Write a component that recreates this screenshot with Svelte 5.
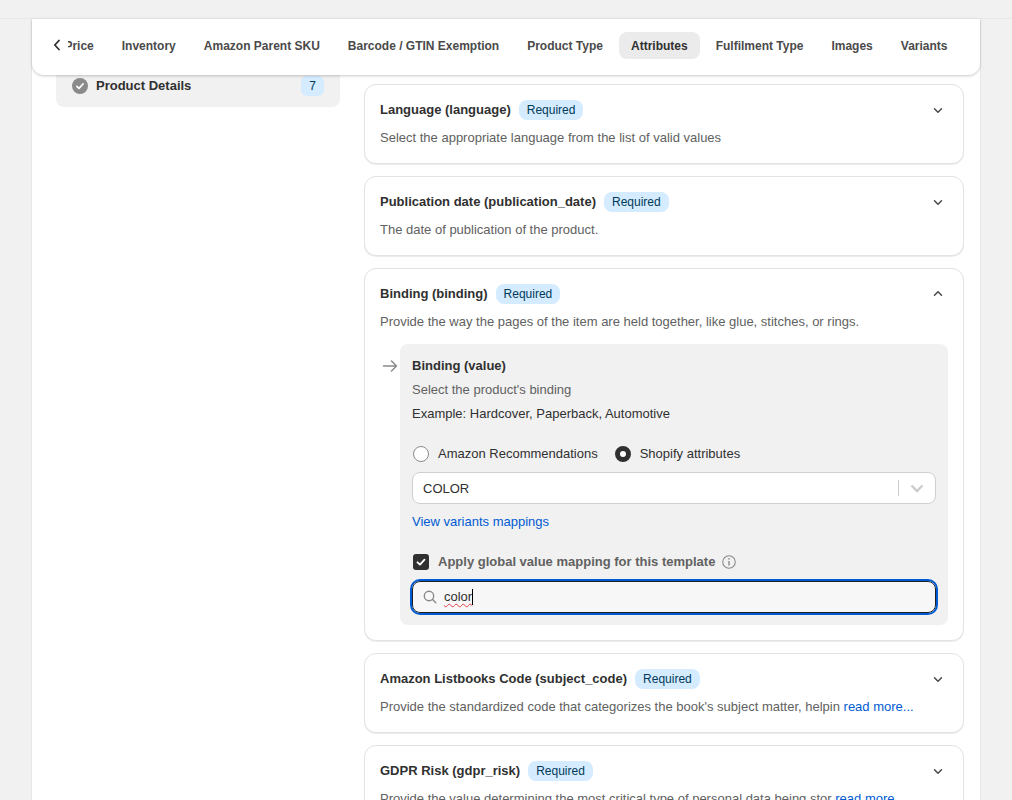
<script>
  const tabs = ['Price', 'Inventory', 'Amazon Parent SKU', 'Barcode / GTIN Exemption', 'Product Type', 'Attributes', 'Fulfilment Type', 'Images', 'Variants'];
  const before = [
    { t: 'Language (language)', d: 'Select the appropriate language from the list of valid values' },
    { t: 'Publication date (publication_date)', d: 'The date of publication of the product.' }
  ];
  const after = [
    { t: 'Amazon Listbooks Code (subject_code)', d: "Provide the standardized code that categorizes the book's subject matter, helpin", more: true },
    { t: 'GDPR Risk (gdpr_risk)', d: 'Provide the value determining the most critical type of personal data being stor', more: true }
  ];
</script>

{#snippet chev(up)}
  <svg class="chev" class:up viewBox="0 0 16 16" width="16" height="16" fill="none" stroke="#4a4a4a" stroke-width="1.5" stroke-linecap="round" stroke-linejoin="round"><path d="M4.5 6.8 8 10.3l3.5-3.5"/></svg>
{/snippet}

{#snippet head(title, up)}
  <div class="head">
    <strong>{title}</strong>
    <span class="badge">Required</span>
    <span class="spacer"></span>
    {@render chev(up)}
  </div>
{/snippet}

{#snippet card(c)}
  <section class="card">
    {@render head(c.t, false)}
    <p class="desc">{c.d}{#if c.more}{' '}<a href="#top">read more...</a>{/if}</p>
  </section>
{/snippet}

<div class="page">
  <div class="canvas">
    <div class="panel">
      <header class="bar">
        <svg class="back" viewBox="0 0 16 16" width="16" height="16" fill="none" stroke="#303030" stroke-width="1.8" stroke-linecap="round" stroke-linejoin="round"><path d="M10 3.5 5.8 8l4.2 4.5"/></svg>
        <nav class="tabs">
          {#each tabs as tab}
            <span class="tab" class:active={tab === 'Attributes'}>{tab}</span>
          {/each}
        </nav>
      </header>

      <div class="content">
        <aside class="side">
          <div class="side-row">
            <svg viewBox="0 0 16 16" width="16" height="16"><circle cx="8" cy="8" r="8" fill="#8a8a8a"/><path d="M4.8 8.3 7 10.4l4.2-4.6" fill="none" stroke="#fff" stroke-width="1.6" stroke-linecap="round" stroke-linejoin="round"/></svg>
            <strong>Product Details</strong>
            <span class="spacer"></span>
            <span class="count">7</span>
          </div>
        </aside>

        <main class="cards">
          {#each before as c}
            {@render card(c)}
          {/each}

          <section class="card">
            {@render head('Binding (binding)', true)}
            <p class="desc">Provide the way the pages of the item are held together, like glue, stitches, or rings.</p>
            <div class="nested">
              <svg class="arrow" viewBox="0 0 16 16" width="16" height="16" fill="none" stroke="#8a8a8a" stroke-width="1.5" stroke-linecap="round" stroke-linejoin="round"><path d="M1.5 8h13M9.5 3l5 5-5 5"/></svg>
              <div class="inner">
                <strong class="line">Binding (value)</strong>
                <p class="desc tight">Select the product's binding</p>
                <p class="example">Example: Hardcover, Paperback, Automotive</p>

                <div class="radios">
                  <label class="radio"><span class="dot"></span>Amazon Recommendations</label>
                  <label class="radio"><span class="dot on"></span>Shopify attributes</label>
                </div>

                <div class="select">
                  <span class="value">COLOR</span>
                  <span class="spacer"></span>
                  <span class="sep"></span>
                  <svg viewBox="0 0 20 20" width="20" height="20" fill="none" stroke="#cccccc" stroke-width="2.4"><path d="M4.5 7.5 10 13l5.5-5.5"/></svg>
                </div>

                <a class="link" href="#top">View variants mappings</a>

                <div class="check">
                  <span class="box"><svg viewBox="0 0 16 16" width="16" height="16" fill="none" stroke="#fff" stroke-width="1.8" stroke-linecap="round" stroke-linejoin="round"><path d="M4.5 8.3 7 10.7l4.5-5"/></svg></span>
                  <strong>Apply global value mapping for this template</strong>
                  <svg viewBox="0 0 16 16" width="16" height="16" fill="none" stroke="#8a8a8a" stroke-width="1.1"><circle cx="8" cy="8" r="6.3"/><path d="M8 7v4.6" stroke-width="1.4"/><circle cx="8" cy="4.9" r=".8" fill="#8a8a8a" stroke="none"/></svg>
                </div>

                <div class="search">
                  <svg viewBox="0 0 16 16" width="16" height="16" fill="none" stroke="#8a8a8a" stroke-width="1.4" stroke-linecap="round"><circle cx="7" cy="7" r="4.7"/><path d="m10.6 10.6 3.2 3.2"/></svg>
                  <span class="typed">color</span><span class="caret"></span>
                </div>
              </div>
            </div>
          </section>

          {#each after as c}
            {@render card(c)}
          {/each}
        </main>
      </div>
    </div>
  </div>
</div>

<style>
  :global(body) {
    margin: 0;
    background: #f1f1f1;
  }
  .page {
    height: 800px;
    overflow: hidden;
    box-sizing: border-box;
    padding-top: 18px;
    font: 13px/20px "Liberation Sans", Arial, sans-serif;
    color: #303030;
  }
  .canvas {
    border-top: 1px solid #e8e8e8;
  }
  .panel {
    width: 948px;
    margin-left: 32px;
    min-height: 781px;
    background: #fff;
    box-shadow: 0 0 0 1px #e6e6e6;
  }
  p { margin: 0; }
  a { color: #005bd3; text-decoration: none; }
  .spacer { flex: 1; }

  .bar {
    position: relative;
    z-index: 2;
    height: 56px;
    box-sizing: border-box;
    padding: 13px 20.5px 0 36px;
    display: flex;
    background: #fff;
    border-radius: 0 0 12px 12px;
    box-shadow: 0 1px 3px rgba(0, 0, 0, 0.22);
  }
  .back {
    position: absolute;
    left: 17px;
    top: 18px;
  }
  .tabs {
    flex: 1;
    min-width: 0;
    overflow: hidden;
    display: flex;
    justify-content: flex-end;
    gap: 4px;
    height: 28px;
  }
  .tab {
    flex: none;
    height: 27px;
    line-height: 28px;
    padding: 0 12px;
    border-radius: 8px;
    font-size: 12px;
    font-weight: 700;
    color: #4a4a4a;
  }
  .tab.active {
    background: #ebebeb;
    color: #303030;
  }

  .content {
    display: flex;
    padding: 0 16px 0 24px;
    gap: 24px;
  }
  .side {
    flex: none;
    width: 284px;
    height: 32px;
    background: #f1f1f1;
    border-radius: 0 0 8px 8px;
  }
  .side-row {
    display: flex;
    align-items: center;
    gap: 8px;
    height: 21px;
    padding: 0 16px;
  }
  .count {
    width: 23px;
    height: 20px;
    margin-top: 1px;
    border-radius: 6px;
    background: #d5ebff;
    color: #003a5a;
    font-size: 12px;
    text-align: center;
  }

  .cards {
    flex: 1;
    min-width: 0;
    padding-top: 9px;
    display: flex;
    flex-direction: column;
    gap: 12px;
  }
  .card {
    flex: none;
    box-sizing: border-box;
    padding: 15px;
    border: 1px solid #e3e3e3;
    border-radius: 12px;
    background: #fff;
    box-shadow: 0 1px 0 rgba(0, 0, 0, 0.08);
  }
  .head {
    display: flex;
    align-items: center;
    gap: 8px;
    height: 20px;
    color: #303030;
  }
  .badge {
    height: 20px;
    padding: 0 8px;
    border-radius: 8px;
    background: #d5ebff;
    color: #003a5a;
    font-size: 12px;
  }
  .chev { margin-right: 2px; }
  .chev.up { transform: rotate(180deg); }
  .desc {
    margin-top: 8px;
    color: #616161;
  }
  .desc.tight { margin-top: 4px; }

  .nested {
    display: flex;
    gap: 2px;
    margin-top: 12px;
    margin-left: 2px;
  }
  .arrow {
    flex: none;
    margin-top: 14px;
  }
  .inner {
    flex: 1;
    min-width: 0;
    padding: 12px;
    background: #f1f1f1;
    border-radius: 8px;
  }
  .line { display: block; }
  .example { margin-top: 4px; color: #303030; }
  .radios {
    display: flex;
    gap: 16px;
    margin-top: 20px;
    height: 20px;
  }
  .radio {
    display: flex;
    align-items: center;
    gap: 9px;
  }
  .dot {
    box-sizing: border-box;
    width: 16px;
    height: 16px;
    margin-left: 1px;
    border: 1px solid #8a8a8a;
    border-radius: 50%;
    background: #fff;
  }
  .dot.on {
    border: 5px solid #303030;
  }
  .select {
    display: flex;
    align-items: center;
    box-sizing: border-box;
    height: 32px;
    margin-top: 8px;
    padding: 0 8px 0 10px;
    border: 1px solid #cfcfcf;
    border-radius: 8px;
    background: #fff;
  }
  .value { padding-top: 1px; }
  .sep {
    width: 1px;
    height: 16px;
    margin-right: 8px;
    background: #cccccc;
  }
  .link {
    display: block;
    margin-top: 8px;
  }
  .check {
    display: flex;
    align-items: center;
    gap: 6px;
    margin-top: 20px;
    color: #616161;
  }
  .box {
    width: 16px;
    height: 16px;
    margin: 0 3px 0 1px;
    border-radius: 3px;
    background: #303030;
  }
  .check svg { display: block; }
  .search {
    display: flex;
    align-items: center;
    box-sizing: border-box;
    height: 32px;
    margin-top: 9px;
    padding-left: 9px;
    border: 1px solid #1f1f1f;
    border-radius: 8px;
    background: #f7f7f7;
    outline: 2px solid #005bd3;
    outline-offset: 0;
  }
  .typed {
    margin-left: 6px;
    text-decoration: underline wavy #e5404f 1.2px;
    text-underline-offset: 2px;
  }
  .caret {
    width: 1px;
    height: 16px;
    background: #000;
  }
</style>
